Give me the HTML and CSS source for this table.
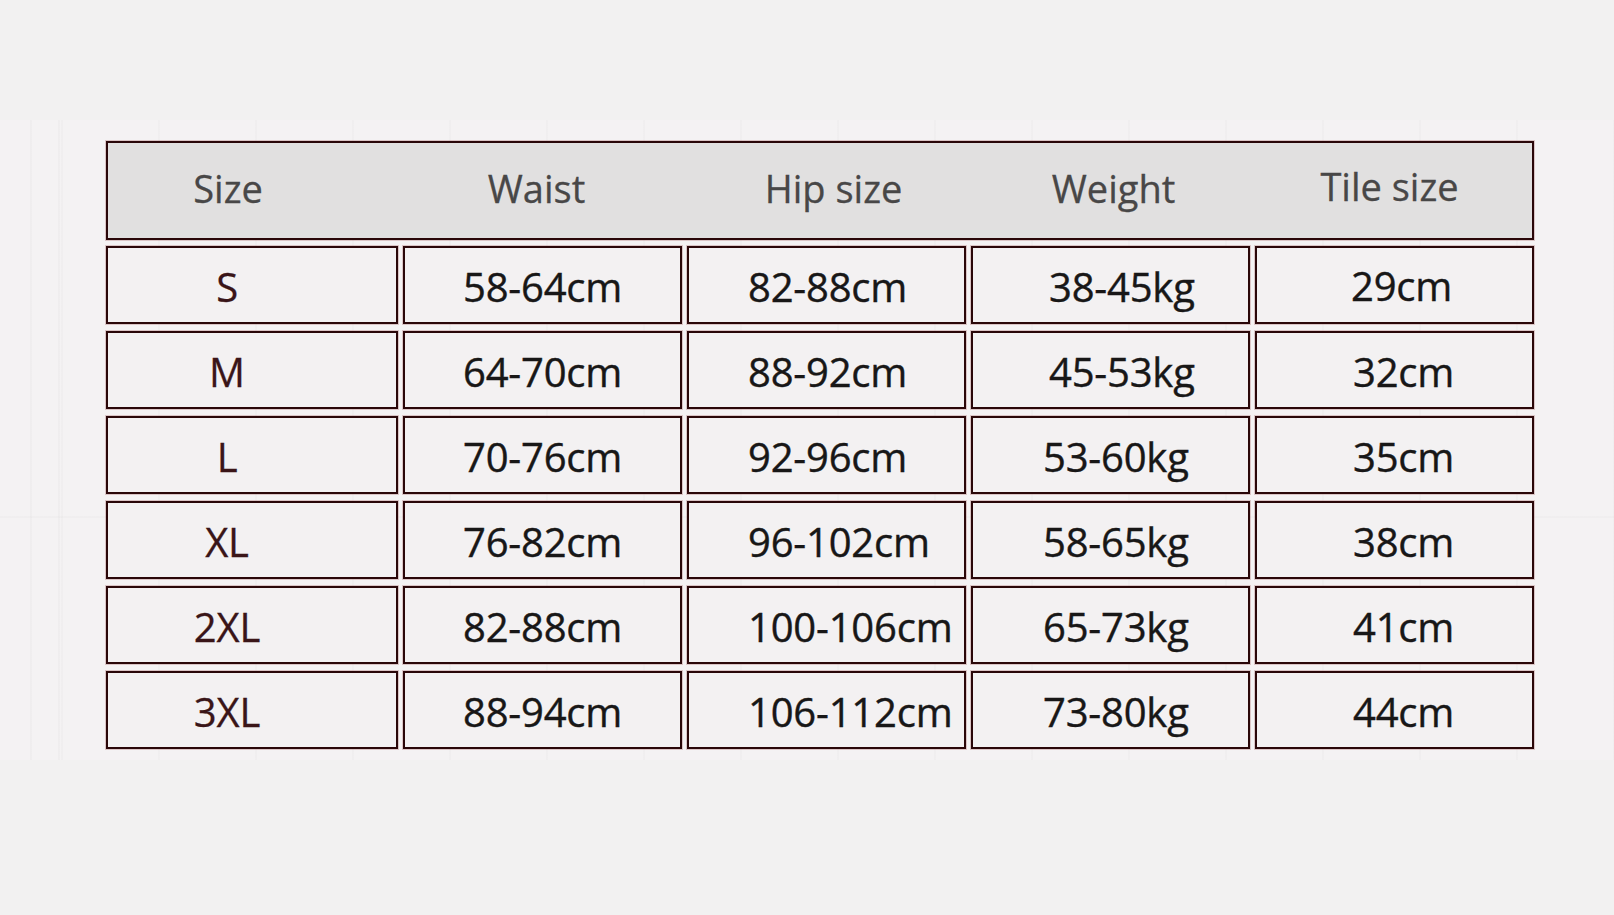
FILE: index.html
```html
<!DOCTYPE html>
<html lang="en">
<head>
<meta charset="utf-8">
<title>Size chart</title>
<link rel="stylesheet" href="styles.css">
</head>
<body>
<main class="page">
  <section class="band">
    <div class="chart">
      <div class="head">
        <div class="hcell c1">Size</div>
        <div class="hcell c2">Waist</div>
        <div class="hcell c3">Hip size</div>
        <div class="hcell c4">Weight</div>
        <div class="hcell c5">Tile size</div>
      </div>
      <div class="rows">
        <div class="cell c1 size">S</div><div class="cell c2">58-64cm</div><div class="cell c3">82-88cm</div><div class="cell c4 w1">38-45kg</div><div class="cell c5 t1">29cm</div>
        <div class="cell c1 size">M</div><div class="cell c2">64-70cm</div><div class="cell c3">88-92cm</div><div class="cell c4 w1">45-53kg</div><div class="cell c5">32cm</div>
        <div class="cell c1 size">L</div><div class="cell c2">70-76cm</div><div class="cell c3">92-96cm</div><div class="cell c4">53-60kg</div><div class="cell c5">35cm</div>
        <div class="cell c1 size">XL</div><div class="cell c2">76-82cm</div><div class="cell c3">96-102cm</div><div class="cell c4">58-65kg</div><div class="cell c5">38cm</div>
        <div class="cell c1 size">2XL</div><div class="cell c2">82-88cm</div><div class="cell c3">100-106cm</div><div class="cell c4">65-73kg</div><div class="cell c5">41cm</div>
        <div class="cell c1 size">3XL</div><div class="cell c2">88-94cm</div><div class="cell c3">106-112cm</div><div class="cell c4">73-80kg</div><div class="cell c5">44cm</div>
      </div>
    </div>
  </section>
</main>
</body>
</html>
```

FILE: styles.css
```css
html, body {
  margin: 0;
  padding: 0;
  background: #f2f1f1;
}
body {
  width: 1614px;
  height: 915px;
  overflow: hidden;
  font-family: "Open Sans", "Noto Sans", "Noto Sans CJK SC", sans-serif;
}
.page {
  padding-top: 120px;
}
.band {
  height: 640px;
  box-sizing: border-box;
  padding: 21px 0 0 106px;
  background-color: #f4f2f3;
  background-image:
    linear-gradient(90deg, transparent 30px, rgba(0,0,0,0.018) 30px, rgba(0,0,0,0.018) 32px, transparent 32px,
      transparent 58px, rgba(0,0,0,0.02) 58px, rgba(0,0,0,0.02) 60px, transparent 60px),
    repeating-linear-gradient(90deg, transparent 0, transparent 61px, rgba(0,0,0,0.014) 61px, rgba(0,0,0,0.014) 63px, transparent 63px, transparent 97px),
    linear-gradient(0deg, transparent 242px, rgba(0,0,0,0.015) 242px, rgba(0,0,0,0.015) 244px, transparent 244px);
}
.chart {
  width: 1428px;
  display: flex;
  flex-direction: column;
  gap: 6px;
}
.head, .rows {
  display: grid;
  grid-template-columns: 292px 279px 279px 279px 279px;
  column-gap: 5px;
}
.head {
  height: 99px;
  box-sizing: border-box;
  border: 2px solid #2a0709;
  box-shadow: 0 0 0 1px rgba(140, 60, 60, 0.25);
  background: #e1e0e0;
}
.hcell {
  display: flex;
  align-items: center;
  justify-content: center;
  font-size: 38px;
  color: #484747;
  -webkit-text-stroke: 0.3px #484747;
  padding-bottom: 6px;
}
.head .c1 { padding-right: 52px; }
.head .c2 { padding-right: 16px; }
.head .c3 { padding-left: 10px; }
.head .c4 { padding-left: 2px; }
.head .c5 { padding-right: 14px; padding-bottom: 10px; }
.rows {
  grid-auto-rows: 78px;
  row-gap: 7px;
}
.cell {
  box-sizing: border-box;
  border: 2px solid #2a0709;
  box-shadow: 0 0 0 1px rgba(140, 60, 60, 0.25);
  background: #f3f1f2;
  display: flex;
  align-items: center;
  font-size: 40px;
  color: #181717;
  -webkit-text-stroke: 0.4px #181717;
  padding-top: 3px;
  letter-spacing: -0.2px;
}
.cell.size {
  justify-content: center;
  padding-right: 50px;
  color: #3a1518;
  -webkit-text-stroke: 0.3px #3a1518;
}
.cell.c2 { padding-left: 58px; }
.cell.c3 { padding-left: 59px; }
.cell.c4 { padding-left: 70px; }
.cell.c4.w1 { padding-left: 76px; }
.cell.c5 { padding-left: 96px; }
.cell.c5.t1 { padding-left: 94px; padding-top: 0; }
```
